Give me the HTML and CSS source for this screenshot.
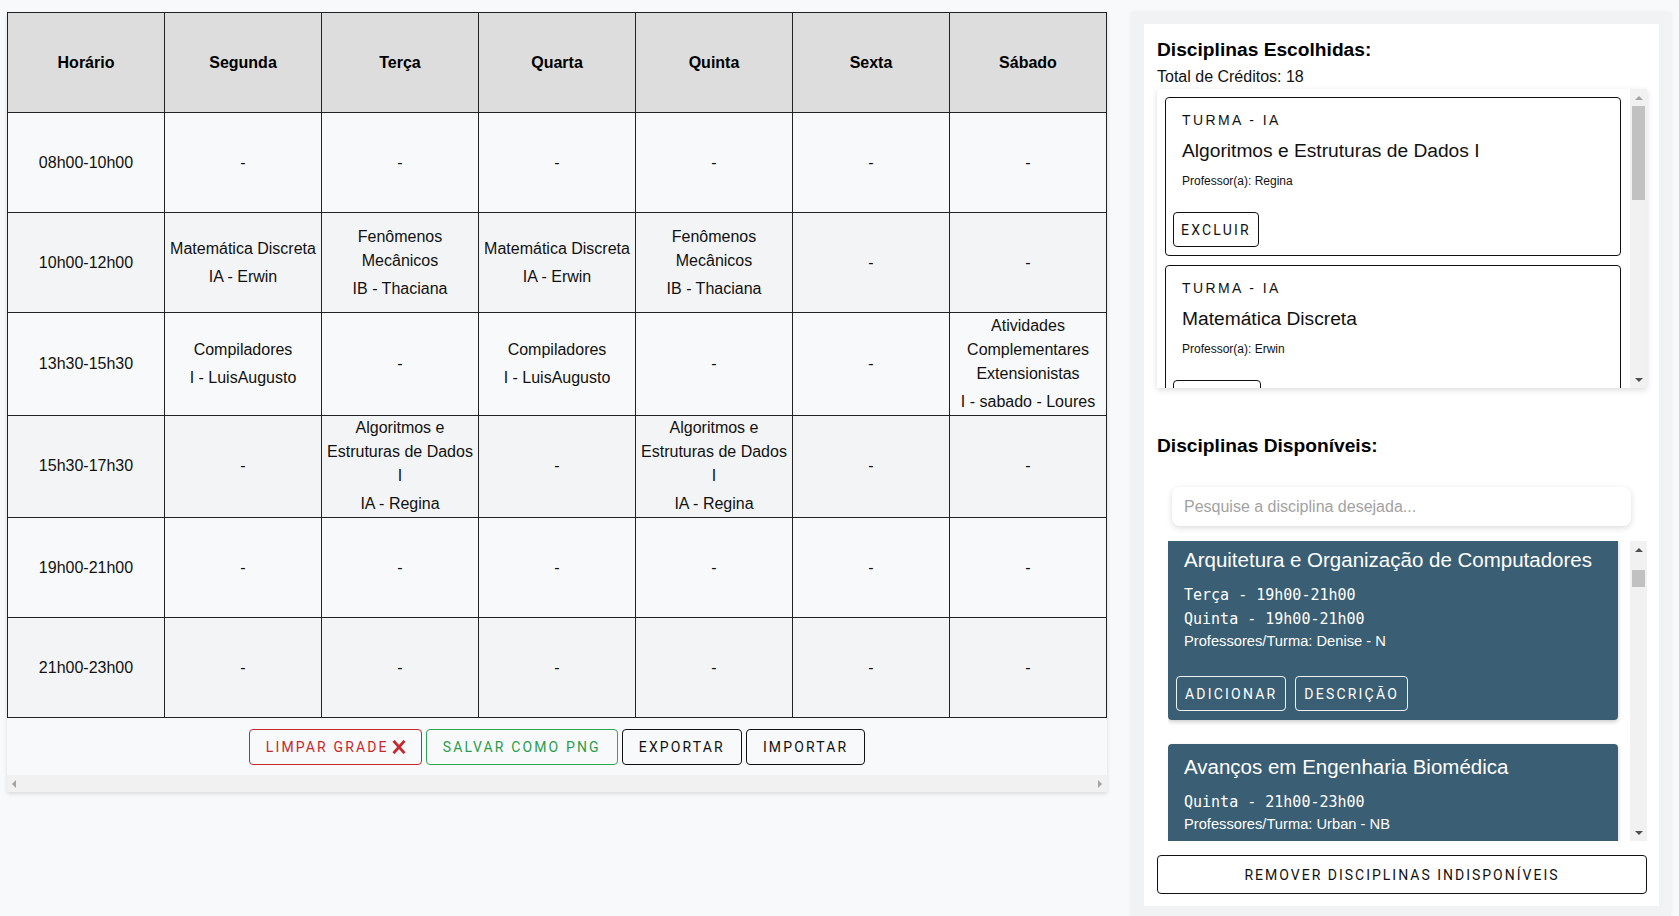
FILE: index.html
```html
<!DOCTYPE html>
<html lang="pt-BR">
<head>
<meta charset="utf-8">
<title>Grade de Horários</title>
<link rel="stylesheet" href="styles.css">
</head>
<body>
<div class="page">
  <main class="schedule-card">
    <table class="grade">
      <colgroup>
        <col><col><col><col><col><col><col>
      </colgroup>
      <thead>
        <tr><th>Horário</th><th>Segunda</th><th>Terça</th><th>Quarta</th><th>Quinta</th><th>Sexta</th><th>Sábado</th></tr>
      </thead>
      <tbody>
        <tr><td>08h00-10h00</td><td>-</td><td>-</td><td>-</td><td>-</td><td>-</td><td>-</td></tr>
        <tr>
          <td>10h00-12h00</td>
          <td><div>Matemática Discreta</div><div class="sub">IA - Erwin</div></td>
          <td><div>Fenômenos Mecânicos</div><div class="sub">IB - Thaciana</div></td>
          <td><div>Matemática Discreta</div><div class="sub">IA - Erwin</div></td>
          <td><div>Fenômenos Mecânicos</div><div class="sub">IB - Thaciana</div></td>
          <td>-</td><td>-</td>
        </tr>
        <tr>
          <td>13h30-15h30</td>
          <td><div>Compiladores</div><div class="sub">I - LuisAugusto</div></td>
          <td>-</td>
          <td><div>Compiladores</div><div class="sub">I - LuisAugusto</div></td>
          <td>-</td><td>-</td>
          <td><div>Atividades Complementares Extensionistas</div><div class="sub">I - sabado - Loures</div></td>
        </tr>
        <tr>
          <td>15h30-17h30</td>
          <td>-</td>
          <td><div>Algoritmos e Estruturas de Dados I</div><div class="sub">IA - Regina</div></td>
          <td>-</td>
          <td><div>Algoritmos e Estruturas de Dados I</div><div class="sub">IA - Regina</div></td>
          <td>-</td><td>-</td>
        </tr>
        <tr><td>19h00-21h00</td><td>-</td><td>-</td><td>-</td><td>-</td><td>-</td><td>-</td></tr>
        <tr><td>21h00-23h00</td><td>-</td><td>-</td><td>-</td><td>-</td><td>-</td><td>-</td></tr>
      </tbody>
    </table>
    <div class="actions">
      <button class="btn btn-red">LIMPAR GRADE<svg class="x-icon" viewBox="0 0 14 14" width="14" height="14"><path d="M1.5 0.8 L12.5 13.2 M12.5 0.8 L1.5 13.2" stroke="#c8282d" stroke-width="2.8" fill="none"/></svg></button>
      <button class="btn btn-green">SALVAR COMO PNG</button>
      <button class="btn">EXPORTAR</button>
      <button class="btn">IMPORTAR</button>
    </div>
    <div class="hscroll">
      <span class="tri tri-left"></span>
      <span class="tri tri-right"></span>
    </div>
  </main>

  <aside class="side">
    <div class="side-inner">
      <h2 class="heading">Disciplinas Escolhidas:</h2>
      <p class="credits">Total de Créditos: 18</p>
      <div class="chosen-box">
        <div class="chosen-list">
          <article class="chosen-card">
            <div class="cc-content">
              <div class="turma">TURMA - IA</div>
              <div class="cc-title">Algoritmos e Estruturas de Dados I</div>
              <div class="cc-prof">Professor(a): Regina</div>
            </div>
            <div class="cc-actions"><button class="btn-sm">EXCLUIR</button></div>
          </article>
          <article class="chosen-card">
            <div class="cc-content">
              <div class="turma">TURMA - IA</div>
              <div class="cc-title">Matemática Discreta</div>
              <div class="cc-prof">Professor(a): Erwin</div>
            </div>
            <div class="cc-actions"><button class="btn-sm btn-hidden-text" aria-label="EXCLUIR"></button></div>
          </article>
        </div>
        <div class="vscroll">
          <div class="vs-btn"><span class="tri tri-up"></span></div>
          <div class="vs-track"><div class="vs-thumb thumb-chosen"></div></div>
          <div class="vs-btn"><span class="tri tri-down"></span></div>
        </div>
      </div>

      <h2 class="heading heading-avail">Disciplinas Disponíveis:</h2>
      <div class="search-wrap">
        <input class="search" type="text" placeholder="Pesquise a disciplina desejada...">
      </div>
      <div class="avail-box">
        <div class="avail-list">
          <div class="avail-inner">
            <article class="avail-card">
              <div class="ac-content">
                <div class="ac-title">Arquitetura e Organização de Computadores</div>
                <div class="ac-sched">Terça - 19h00-21h00</div>
                <div class="ac-sched-next">Quinta - 19h00-21h00</div>
                <div class="ac-prof">Professores/Turma: Denise - N</div>
              </div>
              <div class="ac-actions">
                <button class="btn-sm btn-light">ADICIONAR</button>
                <button class="btn-sm btn-light">DESCRIÇÃO</button>
              </div>
            </article>
            <article class="avail-card">
              <div class="ac-content">
                <div class="ac-title">Avanços em Engenharia Biomédica</div>
                <div class="ac-sched">Quinta - 21h00-23h00</div>
                <div class="ac-prof">Professores/Turma: Urban - NB</div>
              </div>
            </article>
          </div>
        </div>
        <div class="vscroll">
          <div class="vs-btn"><span class="tri tri-up tri-dark"></span></div>
          <div class="vs-track"><div class="vs-thumb thumb-avail"></div></div>
          <div class="vs-btn"><span class="tri tri-down"></span></div>
        </div>
      </div>
      <button class="btn-remove">REMOVER DISCIPLINAS INDISPONÍVEIS</button>
    </div>
  </aside>
</div>
</body>
</html>
```

FILE: styles.css
```css
* { box-sizing: border-box; }

html, body {
  margin: 0;
  padding: 0;
  height: 100%;
  overflow: hidden;
}

body {
  background: #f8f9fa;
  font-family: "Liberation Sans", Arial, sans-serif;
  color: #111;
}

.page {
  display: flex;
  align-items: flex-start;
  gap: 24px;
  padding: 12px 8px 0 7px;
  height: 916px;
}

/* ---------- schedule ---------- */
.schedule-card {
  flex: none;
  width: 1100px;
  background: #f8f9fa;
  box-shadow: 0 2px 4px rgba(0, 0, 0, 0.12);
}

.grade {
  width: 1100px;
  border-collapse: collapse;
  table-layout: fixed;
  font-size: 16px;
}

.grade th,
.grade td {
  border: 1px solid #222;
  padding: 0.75px 2px;
  text-align: center;
  vertical-align: middle;
  line-height: 24px;
}

.grade thead tr,
.grade tbody tr { height: 100px; }

.grade th {
  background: #dddddd;
  font-weight: bold;
  color: #000;
}

.grade tbody tr:nth-child(odd) td { background: #f8f9fa; }
.grade tbody tr:nth-child(even) td { background: #f3f4f6; }

.sub { margin-top: 4px; }

.actions {
  display: flex;
  justify-content: center;
  gap: 4px;
  padding: 11px 0 10px;
}

.btn {
  display: inline-flex;
  align-items: center;
  height: 36px;
  padding: 0 16px;
  border: 1px solid #111;
  border-radius: 4px;
  background: transparent;
  color: #111;
  font-family: Roboto, "Liberation Sans", sans-serif;
  font-size: 14px;
  letter-spacing: 2.15px;
}

.btn-red {
  border-color: #c8282d;
  color: #c8282d;
  padding: 0 15px 0 16px;
}

.x-icon { margin-left: 3px; }

.btn-green {
  border-color: #2ea652;
  color: #2a9d4e;
}

.hscroll {
  height: 17px;
  background: #f1f1f1;
  display: flex;
  justify-content: space-between;
  align-items: center;
  padding: 0 5px;
}

.tri { display: block; width: 0; height: 0; }
.tri-left {
  border-top: 4px solid transparent;
  border-bottom: 4px solid transparent;
  border-right: 4px solid #a3a3a3;
}
.tri-right {
  border-top: 4px solid transparent;
  border-bottom: 4px solid transparent;
  border-left: 4px solid #a3a3a3;
}
.tri-up {
  border-left: 4px solid transparent;
  border-right: 4px solid transparent;
  border-bottom: 4px solid #a3a3a3;
}
.tri-up.tri-dark { border-bottom-color: #505050; }
.tri-down {
  border-left: 4px solid transparent;
  border-right: 4px solid transparent;
  border-top: 4px solid #505050;
}

/* ---------- side panel ---------- */
.side {
  flex: none;
  width: 540px;
  background: #f1f2f4;
  padding: 12px 12px 12px 13px;
  box-shadow: 0 0 4px rgba(0, 0, 0, 0.05);
}

.side-inner {
  background: #fff;
  padding: 14px 12px 12px 13px;
}

.heading {
  margin: 0;
  font-size: 19.2px;
  line-height: 24px;
  font-weight: bold;
  color: #000;
}

.credits {
  margin: 6px 0 0;
  font-size: 16px;
  line-height: 18px;
}

.chosen-box {
  margin-top: 3px;
  height: 299px;
  display: flex;
  background: #fff;
  box-shadow: 0 2px 6px rgba(0, 0, 0, 0.14);
  overflow: hidden;
}

.chosen-list {
  flex: 1;
  min-width: 0;
  padding: 8px 9px 0 8px;
  display: flex;
  flex-direction: column;
  gap: 9px;
  overflow: hidden;
}

.chosen-card {
  flex: none;
  border: 1px solid #111;
  border-radius: 4px;
  background: #fff;
}

.cc-content { padding: 12px 16px 0; }

.turma {
  font-size: 14px;
  line-height: 20px;
  letter-spacing: 2.4px;
}

.cc-title {
  margin-top: 7px;
  font-size: 19.2px;
  line-height: 28px;
}

.cc-prof {
  margin-top: 7px;
  font-size: 12px;
  line-height: 18px;
}

.cc-actions { padding: 22px 8px 8px 7px; }

.btn-sm {
  height: 35px;
  padding: 0 7px;
  border: 1px solid #111;
  border-radius: 4px;
  background: transparent;
  color: #111;
  font-family: Roboto, "Liberation Sans", sans-serif;
  font-size: 14px;
  letter-spacing: 2.2px;
}

.btn-hidden-text { width: 88px; }

.vscroll {
  flex: none;
  width: 17px;
  background: #f1f1f1;
  display: flex;
  flex-direction: column;
}

.vs-btn {
  height: 17px;
  display: flex;
  align-items: center;
  justify-content: center;
}

.vs-track {
  flex: 1;
  padding: 0 2px;
}

.vs-thumb { background: #c1c1c1; }
.thumb-chosen { height: 94px; }
.thumb-avail { height: 17px; margin-top: 12px; }

.heading-avail { margin-top: 46px; }

.search-wrap {
  margin-top: 29px;
  padding: 0 16px 0 15px;
}

.search {
  display: block;
  width: 100%;
  height: 39px;
  border: 0;
  border-radius: 8px;
  background: #fff;
  box-shadow: 0 2px 6px rgba(0, 0, 0, 0.14);
  padding: 0 12px;
  font-family: "Liberation Sans", Arial, sans-serif;
  font-size: 16px;
  color: #111;
  outline: none;
}

.search::placeholder { color: #a2a2a2; }

.avail-box {
  margin-top: 15px;
  margin-left: 11px;
  height: 300px;
  display: flex;
}

.avail-list {
  flex: 1;
  min-width: 0;
  padding-right: 12px;
  overflow: hidden;
}

.avail-inner {
  margin-top: -4px;
  display: flex;
  flex-direction: column;
  gap: 24px;
}

.avail-card {
  flex: none;
  min-height: 183px;
  background: #3a5e73;
  color: #fff;
  border-radius: 4px;
  box-shadow: 0 2px 4px rgba(0, 0, 0, 0.2);
}

.ac-content { padding: 11px 16px 0 16px; }

.ac-title {
  font-size: 20.5px;
  line-height: 24px;
}

.ac-sched,
.ac-sched-next {
  font-family: "DejaVu Sans Mono", "Liberation Mono", monospace;
  font-size: 15px;
  line-height: 24px;
}

.ac-sched { margin-top: 11px; }

.ac-prof {
  font-size: 14.7px;
  line-height: 20px;
}

.ac-actions {
  display: flex;
  gap: 9px;
  padding: 25px 8px 8px;
}

.btn-light {
  border-color: rgba(255, 255, 255, 0.92);
  color: #fff;
  padding: 0 8px;
}

.btn-remove {
  display: block;
  width: 100%;
  margin-top: 14px;
  height: 39px;
  border: 1px solid #111;
  border-radius: 4px;
  background: #fff;
  color: #111;
  font-family: Roboto, "Liberation Sans", sans-serif;
  font-size: 14px;
  letter-spacing: 2px;
}
```
